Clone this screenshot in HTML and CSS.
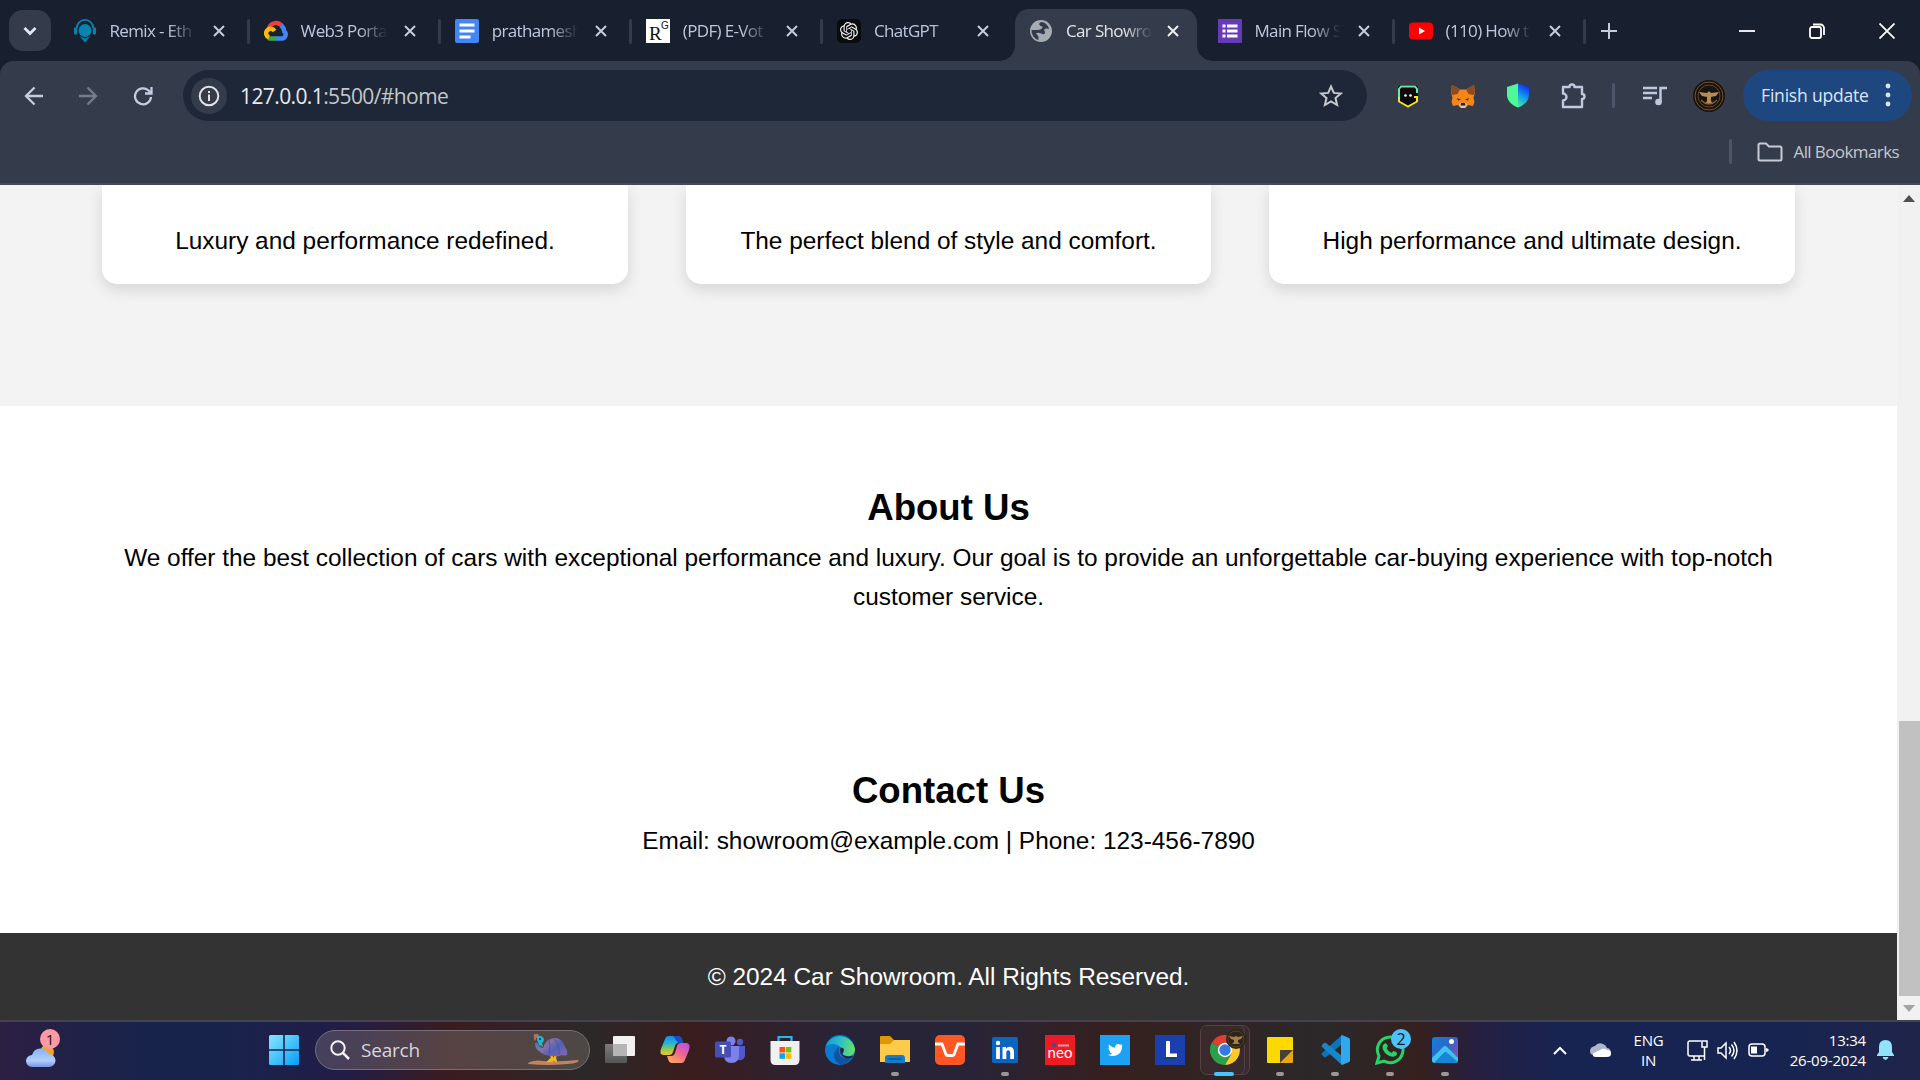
FILE: index.html
```html
<!DOCTYPE html>
<html lang="en"><head><meta charset="utf-8"><title>Car Showroom</title><link rel="stylesheet" href="styles.css"></head>
<body>
<header class="tabstrip">
  <button class="tab-search"><svg width="16" height="12" viewBox="0 0 16 12"><path d="M2.500 3l5.500 5.500L13.500 3" fill="none" stroke="#e3e6ee" stroke-width="2.800"/></svg></button>
  <div class="tab"><svg class="fav" viewBox="0 0 24 26"><circle cx="12" cy="12.500" r="7" fill="#0584b0"/><path d="M3 10a9 9 0 0 1 18 0" fill="none" stroke="#0584b0" stroke-width="2"/><rect y="9" width="3.500" height="8" rx="1.700" fill="#0584b0"/><rect x="20.500" y="9" width="3.500" height="8" rx="1.700" fill="#0584b0"/><path d="M6 18.500l6 3 6-3-6 7z" fill="#0584b0"/></svg><span class="tab-title">Remix - Eth</span><svg class="x" viewBox="0 0 14 14"><path d="M2 2l10 10M12 2L2 12"/></svg></div>
  <div class="tab"><svg class="fav" viewBox="0 0 24 24"><path d="M5 9A7.500 7.500 0 0 1 18 7" fill="none" stroke="#ea4335" stroke-width="4.500"/><path d="M17 6.500a8 8 0 0 1 3.300 6A4 4 0 0 1 18 19.500h-6" fill="none" stroke="#4285f4" stroke-width="4.500"/><path d="M12.500 19.500H7a5 5 0 0 1-2.500-.6" fill="none" stroke="#34a853" stroke-width="4.500"/><path d="M5 18.500A4.500 4.500 0 1 1 10.500 12" fill="none" stroke="#fbbc05" stroke-width="4.500"/></svg><span class="tab-title">Web3 Porta</span><svg class="x" viewBox="0 0 14 14"><path d="M2 2l10 10M12 2L2 12"/></svg></div>
  <div class="tab"><svg class="fav" viewBox="0 0 24 24"><rect width="24" height="24" rx="2" fill="#4285f4"/><path d="M4.500 6h15M4.500 12h15M4.500 18h11" stroke="#fff" stroke-width="3"/></svg><span class="tab-title">prathamesh</span><svg class="x" viewBox="0 0 14 14"><path d="M2 2l10 10M12 2L2 12"/></svg></div>
  <div class="tab"><svg class="fav" viewBox="0 0 24 24"><rect width="24" height="24" fill="#fff"/><text x="3" y="21" font-family="Liberation Serif" font-size="19" fill="#111">R</text><text x="15" y="10" font-family="Liberation Sans" font-size="10" fill="#111">G</text></svg><span class="tab-title">(PDF) E-Vot</span><svg class="x" viewBox="0 0 14 14"><path d="M2 2l10 10M12 2L2 12"/></svg></div>
  <div class="tab no-sep"><svg class="fav" viewBox="0 0 24 24"><rect width="24" height="24" rx="5" fill="#090b0c"/><path transform="translate(3 3) scale(.75)" fill="#f0f0f0" d="M22.2819 9.8211a5.9847 5.9847 0 0 0-.5157-4.9108 6.0462 6.0462 0 0 0-6.5098-2.9A6.0651 6.0651 0 0 0 4.9807 4.1818a5.9847 5.9847 0 0 0-3.9977 2.9 6.0462 6.0462 0 0 0 .7427 7.0966 5.98 5.98 0 0 0 .511 4.9107 6.051 6.051 0 0 0 6.5146 2.9001A5.9847 5.9847 0 0 0 13.2599 24a6.0557 6.0557 0 0 0 5.7718-4.2058 5.9894 5.9894 0 0 0 3.9977-2.9001 6.0557 6.0557 0 0 0-.7475-7.0729zm-9.022 12.6081a4.4755 4.4755 0 0 1-2.8764-1.0408l.1419-.0804 4.7783-2.7582a.7948.7948 0 0 0 .3927-.6813v-6.7369l2.02 1.1686a.071.071 0 0 1 .038.052v5.5826a4.504 4.504 0 0 1-4.4945 4.4944zm-9.6607-4.1254a4.4708 4.4708 0 0 1-.5346-3.0137l.142.0852 4.783 2.7582a.7712.7712 0 0 0 .7806 0l5.8428-3.3685v2.3324a.0804.0804 0 0 1-.0332.0615L9.74 19.9502a4.4992 4.4992 0 0 1-6.1408-1.6464zM2.3408 7.8956a4.485 4.485 0 0 1 2.3655-1.9728V11.6a.7664.7664 0 0 0 .3879.6765l5.8144 3.3543-2.0201 1.1685a.0757.0757 0 0 1-.071 0l-4.8303-2.7865A4.504 4.504 0 0 1 2.3408 7.872zm16.5963 3.8558L13.1038 8.364 15.1192 7.2a.0757.0757 0 0 1 .071 0l4.8303 2.7913a4.4944 4.4944 0 0 1-.6765 8.1042v-5.6772a.79.79 0 0 0-.407-.667zm2.0107-3.0231l-.142-.0852-4.7735-2.7818a.7759.7759 0 0 0-.7854 0L9.409 9.2297V6.8974a.0662.0662 0 0 1 .0284-.0615l4.8303-2.7866a4.4992 4.4992 0 0 1 6.6802 4.66zM8.3065 12.863l-2.02-1.1638a.0804.0804 0 0 1-.038-.0567V6.0742a4.4992 4.4992 0 0 1 7.3757-3.4537l-.142.0805L8.704 5.459a.7948.7948 0 0 0-.3927.6813zm1.0976-2.3654l2.602-1.4998 2.6069 1.4998v2.9994l-2.5974 1.4997-2.6067-1.4997Z"/></svg><span class="tab-title">ChatGPT</span><svg class="x" viewBox="0 0 14 14"><path d="M2 2l10 10M12 2L2 12"/></svg></div>
  <div class="tab active no-sep"><svg class="fav" viewBox="0 0 24 24"><circle cx="12" cy="12" r="11" fill="#a7abb2"/><path d="M12.500 3c-4 1-2 4 .5 4.500 2 .5-1 3.500-4 3.500H2.500a9.500 9.500 0 0 0 7 10v-3.500l-2.500-3c2-1.500 5 0 6 .5 2 1 4-1 2.500-3s2-3.500 4.500-2c-.5-3.500-3.500-6.500-7.500-7z" fill="#343c4c"/></svg><span class="tab-title">Car Showro</span><svg class="x" viewBox="0 0 14 14"><path d="M2 2l10 10M12 2L2 12"/></svg></div>
  <div class="tab"><svg class="fav" viewBox="0 0 24 24"><rect width="24" height="24" rx="1" fill="#673ab7"/><path d="M4.500 7h3m1.500 0h10.500M4.500 12h3m1.500 0h10.500M4.500 17h3m1.500 0h10.500" stroke="#fff" stroke-width="3"/></svg><span class="tab-title">Main Flow S</span><svg class="x" viewBox="0 0 14 14"><path d="M2 2l10 10M12 2L2 12"/></svg></div>
  <div class="tab"><svg class="fav" viewBox="0 0 24 24"><rect y="3.500" width="24" height="17" rx="4" fill="#f00"/><path d="M10 8.500l6 3.500-6 3.500z" fill="#fff"/></svg><span class="tab-title">(110) How t</span><svg class="x" viewBox="0 0 14 14"><path d="M2 2l10 10M12 2L2 12"/></svg></div>
  <svg class="new-tab" width="16" height="16" viewBox="0 0 16 16"><path d="M8 0v16M0 8h16" stroke="#c3cde0" stroke-width="2"/></svg>
  <div class="window-controls">
    <svg width="16" height="16" viewBox="0 0 16 16"><path d="M0 8h16"/></svg>
    <svg width="16" height="16" viewBox="0 0 16 16"><rect x="1" y="4" width="11" height="11" rx="2"/><path d="M4 1.500h7.500a3.500 3.500 0 0 1 3.500 3.500v7"/></svg>
    <svg width="16" height="16" viewBox="0 0 16 16"><path d="M.5.5l15 15M15.500.5l-15 15"/></svg>
  </div>
</header>
<div class="toolbar">
  <nav class="address-row">
    <svg class="nav" viewBox="0 0 20 20"><path d="M19 10H2m8.500-8.500L2 10l8.500 8.500"/></svg>
    <svg class="nav dim" viewBox="0 0 20 20"><path d="M1 10h17M9.500 1.500L18 10l-8.500 8.500"/></svg>
    <svg class="nav" viewBox="0 0 20 20"><path d="M18 11a8 8 0 1 1-2.500-6.500L18 7M18.500 1v6.500H12"/></svg>
    <div class="omnibox">
      <span class="info"><svg width="22" height="22" viewBox="0 0 22 22"><circle cx="11" cy="11" r="9.300" fill="none" stroke="#e3e3e6" stroke-width="2"/><path d="M11 9.500v6.500M11 6v2" stroke="#e3e3e6" stroke-width="2"/></svg></span>
      <span class="url"><b>127.0.0.1</b>:5500/#home</span>
      <svg class="star" width="24" height="24" viewBox="0 0 24 24"><path d="M12 2.500l2.800 6.400 7 .6-5.300 4.600 1.600 6.900-6.100-3.700-6.100 3.700 1.600-6.900-5.300-4.600 7-.6z" fill="none" stroke="#c7c9cf" stroke-width="2"/></svg>
    </div>
    <div class="extensions">
      <svg width="24" height="24" viewBox="0 0 24 24"><path d="M4 1h16l2 2v15l-10 6-10-6V3z" fill="#08090c"/><path d="M3 14V5l2-2.500h14l2 2.500v4" fill="none" stroke="#6ee7a0" stroke-width="2"/><path d="M3 13v4.500l9 5 9-5V13h-3" fill="none" stroke="#f7df2e" stroke-width="2"/><circle cx="9.500" cy="11.500" r="1.300" fill="#fff"/><circle cx="14.500" cy="11.500" r="1.300" fill="#fff"/></svg>
      <svg width="24" height="24" viewBox="0 0 24 24"><path d="M1 1l8 4.500h6L23 1l1 7-1.500 6 1 4-1.500 4-5-1-2 2.500h-6L7 21l-5 1-1.500-4 1-4L0 8z" fill="#f6851b"/><path d="M1 1l8 4.500L6.500 10l-5 1L0 8zM23 1l-8 4.500 2.500 4.500 5 1L24 8z" fill="#8f4b20"/><path d="M6 14l4 1.500-3 1zM18 14l-4 1.500 3 1z" fill="#303443"/><path d="M9 19h6l1 2-2 3h-4l-2-3z" fill="#d8c8b8"/><path d="M10 19h4l.5 2.500h-5z" fill="#202226"/></svg>
      <svg width="24" height="25" viewBox="0 0 24 25"><path d="M12 .5v24C5 22 1 17 1 12V4z" fill="#50f796"/><path d="M12 .5L23 4v8c0 5-4 10-11 12.500z" fill="url(#shield)"/><defs><linearGradient id="shield" x1=".3" y1="0" x2="0" y2="1"><stop stop-color="#1039f5"/><stop offset=".5" stop-color="#13a3e8"/><stop offset="1" stop-color="#49f597"/></linearGradient></defs></svg>
      <svg width="26" height="26" viewBox="0 0 26 26"><path d="M2 4h6.500a2.500 2.500 0 0 1 5 0H21v7a2.500 2.500 0 0 1 0 5v8H2v-6.500a3.500 3.500 0 0 0 0-7z" fill="none" stroke="#c0cadf" stroke-width="2.400" stroke-linejoin="round"/></svg>
    </div>
    <i class="divider"></i>
    <svg class="music" width="24" height="20" viewBox="0 0 24 20"><path d="M0 2h14M0 7h14M0 12h9M17.500 16V2H24" fill="none" stroke="#c0cadf" stroke-width="2.400"/><circle cx="15.500" cy="16" r="3.300" fill="#c0cadf"/></svg>
    <svg class="avatar" width="32" height="32" viewBox="0 0 32 32"><circle cx="16" cy="16" r="16" fill="#17130f"/><circle cx="16" cy="16" r="14" fill="none" stroke="#76542f" stroke-width="1"/><circle cx="16" cy="16" r="11" fill="none" stroke="#694821"/><path d="M6 12l8 1 2-2 2 2 8-1-3 4-5 1v4l2 3h-8l2-3v-4l-5-1z" fill="#b98a51"/><path d="M8 20q8 8 16 0" fill="none" stroke="#8a6234" stroke-width="1.200"/></svg>
    <button class="update"><span>Finish update</span><svg width="6" height="26" viewBox="0 0 6 26"><g fill="#d9e5fb"><circle cx="3" cy="4" r="2.400"/><circle cx="3" cy="13" r="2.400"/><circle cx="3" cy="22" r="2.400"/></g></svg></button>
  </nav>
  <div class="bookmarks"><i class="divider"></i><svg width="26" height="20" viewBox="0 0 26 20"><path d="M1.500 3q0-1.500 1.500-1.500h6l3 3h11q1.500 0 1.500 1.500v11q0 1.500-1.500 1.500H3q-1.500 0-1.500-1.500z" fill="none" stroke="#c9cbd2" stroke-width="2"/></svg><span>All Bookmarks</span></div>
</div>
<div class="viewport">
  <main class="page">
    <section class="cars">
      <article class="card">Luxury and performance redefined.</article>
      <article class="card">The perfect blend of style and comfort.</article>
      <article class="card">High performance and ultimate design.</article>
    </section>
    <section class="about"><h2>About Us</h2><p>We offer the best collection of cars with exceptional performance and luxury. Our goal is to provide an unforgettable car-buying experience with top-notch customer service.</p></section>
    <section class="contact"><h2>Contact Us</h2><p>Email: showroom@example.com | Phone: 123-456-7890</p></section>
    <footer class="footer">© 2024 Car Showroom. All Rights Reserved.</footer>
  </main>
  <div class="scrollbar"><svg width="12" height="7" viewBox="0 0 12 7"><path d="M6 0l6 7H0z" fill="#505050"/></svg><i class="thumb"></i><svg width="12" height="7" viewBox="0 0 12 7"><path d="M0 0h12L6 7z" fill="#a3a3a3"/></svg></div>
</div>
<footer class="taskbar">
  <div class="weather"><svg width="34" height="38" viewBox="0 0 34 38"><defs><linearGradient id="cloud" x1="0" y1="0" x2="0" y2="1"><stop stop-color="#88b2f5"/><stop offset=".65" stop-color="#b2cffc"/><stop offset="1" stop-color="#7895e5"/></linearGradient></defs><circle cx="22" cy="21" r="7" fill="#f6a21a"/><path d="M7 36a6 6 0 0 1 0-12 9 9 0 0 1 17-1 6.500 6.500 0 0 1 0 13z" fill="url(#cloud)"/></svg><span class="badge pink">1</span></div>
  <div class="start-group">
    <svg width="30" height="30" viewBox="0 0 30 30"><defs><linearGradient id="win" x1="0" y1="0" x2="1" y2="1"><stop stop-color="#8ae3fb"/><stop offset=".5" stop-color="#46c5fb"/><stop offset="1" stop-color="#079bf9"/></linearGradient></defs><path d="M0 1.500Q0 0 1.500 0h12.700v14.200H0zM15.800 0h12.700Q30 0 30 1.500v12.700H15.800zM0 15.800h14.200V30H1.500Q0 30 0 28.500zM15.800 15.800H30v12.700q0 1.500-1.500 1.500H15.800z" fill="url(#win)"/></svg>
    <div class="search"><svg width="20" height="20" viewBox="0 0 20 20"><circle cx="8" cy="8" r="6.700" fill="none" stroke="#f2f2f5" stroke-width="2"/><path d="M12.500 12.500l6.500 6.500" stroke="#f2f2f5" stroke-width="2.500"/></svg><span>Search</span>
      <svg class="bird" width="52" height="32" viewBox="0 0 52 32"><defs><linearGradient id="plume" x1="0" y1="0" x2="1" y2=".6"><stop stop-color="#3d7fc0"/><stop offset=".45" stop-color="#8a6fa8"/><stop offset=".7" stop-color="#4d62b8"/><stop offset="1" stop-color="#7a62b4"/></linearGradient></defs><path d="M1 30q0-3 10-3.500 16 2 40-.5 2 2-5 3.500-20 2.500-45 .5z" fill="#c5835c"/><path d="M24 19l1 5-3 3h3l3-3 1 4M30 19l-4 8" fill="none" stroke="#eeb62f" stroke-width="2.400"/><path d="M10 9q3 5 6 5Q19 4 28 4q7 0 10 9 3 3 2 8-3 1-5 0-4 2-8 1-11 0-15-5-4-2-4-8z" fill="url(#plume)"/><path d="M27 5q6 6 5 16M22 6q2 7 0 13" fill="none" stroke="#5b4f96" stroke-width="1"/><path d="M7 0q4-1 5 1l-2 2-2 4q-2-3-1-7z" fill="#ad725e"/><path d="M10 2q5-1 7 3 0 3-2 4l1 4-4-2-2-5z" fill="#22b4d2"/><circle cx="13" cy="5" r="1" fill="#123"/></svg></div>
  </div>
  <div class="apps">
    <span class="app"><svg viewBox="0 0 30 30"><defs><linearGradient id="tv1" x1="0" y1="0" x2="0" y2="1"><stop stop-color="#7b7b7b"/><stop offset="1" stop-color="#555"/></linearGradient></defs><rect y="9" width="22" height="19" rx="1" fill="url(#tv1)"/><rect x="8" y="1" width="22" height="20" rx="1" fill="#f1f1f1"/><rect x="8" y="9" width="14" height="12" fill="#b5b5b5"/></svg></span>
    <span class="app"><svg viewBox="0 0 30 30"><defs><linearGradient id="cp1" x1="0" y1="0" x2="0" y2="1"><stop stop-color="#188bed"/><stop offset=".4" stop-color="#28b5d0"/><stop offset=".7" stop-color="#8acb49"/><stop offset="1" stop-color="#f8c62f"/></linearGradient><linearGradient id="cp2" x1="1" y1="0" x2=".3" y2="1"><stop stop-color="#a855f0"/><stop offset=".5" stop-color="#ee6195"/><stop offset="1" stop-color="#ffa45d"/></linearGradient></defs><path d="M8 1h10q3 0 4 4l1 3h-5q-2 0-3 3l-2 6q-1 3-4 3H4q-5 0-3-6L5 4q1-3 3-3z" fill="url(#cp1)"/><path d="M22 28H12q-3 0-4-4l-1-3h5q2 0 3-3l2-7q1-3 4-3h5q5 0 3 7l-4 10q-1 3-3 3z" fill="url(#cp2)"/><path d="M13 1h5q3 0 4 4l1 3h-5z" fill="#1750c4"/></svg></span>
    <span class="app"><svg viewBox="0 0 30 30"><circle cx="16" cy="6" r="4.500" fill="#7b83eb"/><circle cx="25" cy="7" r="3.200" fill="#5059c9"/><path d="M20 11h10v9q0 6-7 5z" fill="#5059c9"/><path d="M9 11h15v9q0 8-7.500 8T9 20z" fill="#7b83eb"/><rect y="6.500" width="16" height="16" rx="1.500" fill="#464eb8"/><text x="8" y="19" text-anchor="middle" font-family="Open Sans" font-weight="700" font-size="12" fill="#fff">T</text></svg></span>
    <span class="app"><svg viewBox="0 0 30 30"><path d="M8.500 7V2h13v5" fill="none" stroke="#27b7ed" stroke-width="2.200"/><path d="M.5 6h29v19q0 5-5 5h-19q-5 0-5-5z" fill="#f0f0f0"/><path d="M9.500 12H15v5.500H9.500z" fill="#f35325"/><path d="M15.800 12h5.500v5.500h-5.500z" fill="#81bc06"/><path d="M9.500 18.300H15v5.500H9.500z" fill="#05a6f0"/><path d="M15.800 18.300h5.500v5.500h-5.500z" fill="#ffba08"/></svg></span>
    <span class="app"><svg viewBox="0 0 30 30"><defs><linearGradient id="edge" x1="0" y1=".4" x2="1" y2=".5"><stop stop-color="#169bd8"/><stop offset=".5" stop-color="#2bc3c6"/><stop offset="1" stop-color="#69e359"/></linearGradient></defs><circle cx="15" cy="15" r="15" fill="#087bd2"/><path d="M27 22a15 15 0 0 1-11 8q-7-3-7-10 0-5 5-8-2 10 6 11 4 0 7-1z" fill="#13529d"/><path d="M1 11A15 15 0 0 1 30 15q-1 6-7 6-4 0-6-2 2-2 1-5Q9 6 1 11z" fill="url(#edge)"/><path d="M19 15q-.5 3-2 4 3 3.500 10 2l1.500 1q-4 2-8 1-7-3-5-10 3-1 3.500 2z" fill="#272534"/></svg></span>
    <span class="app run"><svg viewBox="0 0 30 30"><path d="M0 2q0-1 1-1h9l4 4H29q1 0 1 1v5H0z" fill="#dc9904"/><path d="M0 9h10l4-4h16v22H0z" fill="#fdcb49"/><path d="M5 28v-5q0-3 3-3h14q3 0 3 3v5z" fill="#147dca"/><path d="M8.500 24h13" stroke="#0b599c" stroke-width="1.500"/></svg></span>
    <span class="app"><svg viewBox="0 0 30 30"><rect width="30" height="30" rx="5" fill="#ff5724"/><path d="M0 9h7l4 10.500q.5 1 1.500 1h5q1 0 1.500-1L23 9h7" fill="none" stroke="#fff" stroke-width="2.800"/></svg></span>
    <span class="app run"><svg viewBox="0 0 30 30"><rect x="2" y="2" width="26" height="26" rx="1.500" fill="#0a66c2"/><circle cx="8" cy="8" r="2.200" fill="#fff"/><path d="M6.100 12h3.800v12H6.100zM12.500 12H16v1.800c2-3.500 8-3 8 3.200v7h-3.800v-6.500c0-3-3.900-3-3.900 0V24h-3.800z" fill="#fff"/></svg></span>
    <span class="app"><svg viewBox="0 0 30 30"><rect width="30" height="30" fill="#ed1c24"/><text x="15" y="23" text-anchor="middle" font-family="Lato" font-size="15" fill="#fff">neo</text><circle cx="9" cy="10" r="2.500" fill="#6e3b87"/><path d="M13 10.500h11" stroke="#eba0a3" stroke-width="2"/></svg></span>
    <span class="app"><svg viewBox="0 0 30 30"><rect width="30" height="30" fill="#1da1f2"/><path d="M22 11.500c0 6-4 9.500-9 9.500-2 0-3.500-.5-5-1.300 2 .1 3.300-.4 4.300-1.200-1.500-.2-2.400-1-2.800-2.200h1.200c-1.500-.6-2.200-1.700-2.200-3.100l1.200.4C8.300 12.200 8.300 10.800 9 9.500c1.700 2 3.700 3.200 6.200 3.300-.6-3.600 3-5 5-3l2-.7-1.200 1.700 1.700-.4z" fill="#fff"/></svg></span>
    <span class="app"><svg viewBox="0 0 30 30"><rect width="30" height="30" fill="#1c3faf"/><path d="M11 22l-3 2H20l2-2z" fill="#0b4a5c"/><path d="M11 6h4v12.500h7V22H11z" fill="#fff"/></svg></span>
    <span class="app current"><svg viewBox="0 0 30 30"><path d="M15 15L2 7.500A15 15 0 0 1 28 7.500z" fill="#e23d30"/><path d="M15 15L2 7.500A15 15 0 0 0 15 30l6.500-11.200z" fill="#2c9f4b"/><path d="M15 8h13.200A15 15 0 0 1 15 30l6.500-11.200z" fill="#fdca28"/><circle cx="15" cy="15" r="7.200" fill="#fff"/><circle cx="15" cy="15" r="5.700" fill="#3479e9"/></svg><svg class="profile" viewBox="0 0 20 20"><circle cx="10" cy="10" r="10" fill="#2d241c"/><circle cx="10" cy="10" r="8" fill="none" stroke="#5a4125"/><path d="M3 7l5 1 2-1 2 1 5-1-2 3-3 1v2l2 2H6l2-2v-2l-3-1z" fill="#a57f49"/></svg></span>
    <span class="app run"><svg viewBox="0 0 30 30"><path d="M3 2h24q1 0 1 1v12l-13 13H3q-1 0-1-1V3q0-1 1-1z" fill="#ffd800"/><path d="M15 15h13L15 28z" fill="#454139"/><path d="M15 28L28 15v12q0 1-1 1z" fill="#eba711"/></svg></span>
    <span class="app run"><svg viewBox="0 0 30 30"><path d="M22 0L2 18q-1 1 0 2l2 2q1 .6 2 0L22 9z" fill="#0c75b9"/><path d="M22 30L2 12q-1-1 0-2l2-2q1-.6 2 0l16 13z" fill="#1487cd"/><path d="M22 0l7 3q1 .5 1 1.500v21q0 1-1 1.500l-7 3-1-1V1z" fill="#2fa8ee"/></svg></span>
    <span class="app run"><svg viewBox="0 0 30 30"><path d="M2 28l2-7A12.800 12.800 0 1 1 9 26z" fill="none" stroke="#25d366" stroke-width="3"/><path d="M9 9q2-2 4 2l-1.500 2q2 4 5 5l2-2q5 1 3 4-2 3-7 1-6-3-7-8-.3-3 1.500-4z" fill="#25d366"/></svg><b class="badge blue">2</b></span>
    <span class="app run"><svg viewBox="0 0 30 30"><defs><linearGradient id="ph" x1="0" y1="0" x2="1" y2=".7"><stop stop-color="#137edb"/><stop offset=".6" stop-color="#3465c5"/><stop offset="1" stop-color="#8554b0"/></linearGradient></defs><rect x="2" y="2" width="26" height="26" rx="3" fill="url(#ph)"/><circle cx="21.500" cy="6.500" r="2.500" fill="#fff"/><path d="M2 23l11-11q2-2 4 0l11 11v2q0 3-3 3H5q-3 0-3-3z" fill="#3fc4f0"/><path d="M4 28l9.500-10q2-2 4 0L28 27l-3 1z" fill="#1886d7"/></svg></span>
  </div>
  <div class="tray">
    <svg class="chevron" width="14" height="9" viewBox="0 0 14 9"><path d="M1 8l6-6 6 6" fill="none" stroke="#fff" stroke-width="2"/></svg>
    <svg class="onedrive" width="21" height="14" viewBox="0 0 21 14"><path d="M4 12Q0 12 0 8t5-5q3-4 8-2 3 1 4 4 3 0 4 4t-4 4z" fill="#aeb5cc"/><path d="M3 13q-1-3 3-4l6-3q3-1 5 1 4 0 4 3.500T17 14H6q-2 0-3-1z" fill="#fff"/></svg>
    <span class="lang">ENG<br>IN</span>
    <svg class="monitor" width="21" height="21" viewBox="0 0 21 21"><path d="M14 1H3Q1 1 1 3v11q0 2 2 2h14M4 20h11M7 16v4M12 16v4M15 1h5v6h-5zM17.500 7v13" fill="none" stroke="#fff" stroke-width="1.500"/></svg>
    <svg class="volume" width="21" height="19" viewBox="0 0 21 19"><path d="M1 7h3l5-5v15l-5-5H1zM12 6q3 3.500 0 7M14.500 3.500q5 6 0 12M17 1q6 8.500 0 17" fill="none" stroke="#fff" stroke-width="1.500"/></svg>
    <svg class="battery" width="21" height="14" viewBox="0 0 21 14"><rect x="1" y="1" width="16" height="12" rx="3" fill="none" stroke="#fff" stroke-width="1.500"/><path d="M3 3.500h6v7H3zM18 5l2.500 1v2L18 9z" fill="#fff"/></svg>
    <span class="clock">13:34<br>26-09-2024</span>
    <svg class="bell" width="17" height="20" viewBox="0 0 17 20"><path d="M8.500 0Q15 0 15 7v5l2 3v1H0v-1l2-3V7q0-7 6.500-7zM5.500 17h6q-1 3-3 3t-3-3z" fill="#91e3fc"/></svg>
  </div>
</footer>
</body></html>
```
FILE: styles.css
```css
* { box-sizing: border-box; }
body { margin: 0; width: 1920px; height: 1080px; overflow: hidden; display: flex; flex-direction: column; background: #182030; font-family: "Open Sans", "Noto Sans", sans-serif; }
svg { display: block; flex: none; }
button { border: 0; padding: 0; font: inherit; color: inherit; }
h2, p { margin: 0; }

.tabstrip { flex: none; height: 61px; display: flex; align-items: center; background: #182030; color: #bdc8dc; }
.tab-search { width: 42px; height: 41px; margin: 0 7px 0 9px; border-radius: 14px; background: #343c4c; display: grid; place-items: center; }
.tab { width: 191.1px; height: 52px; margin-top: 9px; padding: 0 23px 9px 15px; display: flex; align-items: center; position: relative; flex: none; }
.tab::after { content: ""; position: absolute; right: -1px; top: 10px; width: 3px; height: 25px; border-radius: 2px; background: #343c4c; }
.tab.no-sep::after { display: none; }
.fav { width: 24px; height: 24px; }
.tab-title { width: 91px; margin-left: 12.5px; white-space: nowrap; font-size: 17px; letter-spacing: -.65px; -webkit-mask-image: linear-gradient(90deg, #000 64%, transparent 95%); mask-image: linear-gradient(90deg, #000 64%, transparent 95%); }
.x { width: 14px; height: 14px; margin-left: auto; stroke: #c3cde0; stroke-width: 2; fill: none; }
.tab.active { width: 181.5px; margin-left: 2px; margin-right: 6px; padding-left: 14px; padding-right: 17px; background: #343c4c; border-radius: 14px 14px 0 0; color: #e3e4e8; }
.active .x { stroke: #eee; }
.tab.active::before, .tab.active::after { content: ""; display: block; position: absolute; top: auto; bottom: 0; width: 15px; height: 15px; border-radius: 0; }
.tab.active::before { left: -15px; background: radial-gradient(circle at 0 0, transparent 14.5px, #343c4c 15px); }
.tab.active::after { right: -15px; background: radial-gradient(circle at 100% 0, transparent 14.5px, #343c4c 15px); }
.new-tab { margin-left: 16px; }
.window-controls { margin-left: auto; margin-right: 25px; display: flex; gap: 54px; stroke: #fff; stroke-width: 1.8; fill: none; }

.toolbar { flex: none; height: 124px; background: #343c4c; border-bottom: 2px solid #474a50; border-radius: 14px 14px 0 0; padding-top: 9px; }
.address-row { height: 51px; display: flex; align-items: center; padding: 0 8px 0 24px; }
.nav { width: 20px; height: 20px; margin-right: 34px; fill: none; stroke: #c3cde0; stroke-width: 2.3; }
.nav.dim { stroke: #747d8e; }
.nav:nth-child(3) { margin: 0 30px 0 1px; }
.omnibox { width: 1184px; height: 51px; border-radius: 26px; background: #1e2737; display: flex; align-items: center; padding: 0 24px 0 8px; }
.info { width: 36px; height: 36px; border-radius: 50%; background: #343c4c; display: grid; place-items: center; }
.url { margin-left: 13px; font-size: 21px; color: #c5c7cc; letter-spacing: -.6px; }
.url b { font-weight: 400; color: #e8eaee; }
.star { margin-left: auto; }
.extensions { display: flex; align-items: center; gap: 31.2px; margin-left: 29px; }
.divider { width: 3px; height: 25px; border-radius: 2px; background: #4d5668; }
.address-row .divider { margin: 0 28px 0 25px; }
.avatar { margin: 0 18px 0 26px; }
.update { width: 169px; height: 51px; border-radius: 26px; background: #1f477f; color: #dbe6fa; font-size: 17.5px; letter-spacing: -.2px; display: flex; align-items: center; justify-content: space-between; padding: 0 21px 1px 18px; white-space: nowrap; }
.bookmarks { height: 62px; display: flex; align-items: center; justify-content: flex-end; padding: 0 21px 1px 0; font-size: 17px; letter-spacing: -.6px; color: #c5c7cc; }
.bookmarks svg { margin: 0 11px 0 25px; }

.viewport { flex: none; height: 835px; display: flex; overflow: hidden; }
.page { width: 1897px; background: #fff; font-family: "Liberation Sans", Arial, sans-serif; font-size: 24.4px; line-height: 39.04px; text-align: center; color: #000; }
.cars { height: 221px; background: #f3f3f3; padding: 0 102px; display: flex; gap: 57.6px; overflow: hidden; }
.card { flex: 1; height: 99px; padding-top: 36px; background: #fff; border-radius: 0 0 15px 15px; box-shadow: 0 6px 15px rgba(0,0,0,.12); }
.about, .contact { padding: 73.2px 102px; }
h2 { font-size: 36.6px; line-height: 58.56px; }
.footer { height: 88px; background: #333; color: #fff; padding-top: 24.4px; }
.scrollbar { width: 23px; background: #f1f1f1; display: flex; flex-direction: column; align-items: center; padding: 10px 0 8px; }
.thumb { width: 21px; height: 275px; margin: auto 0 9px 2px; background: #c1c1c1; }

.taskbar { flex: none; height: 60px; padding-bottom: 2px; border-top: 2px solid #45434f; display: flex; align-items: center; position: relative; color: #fff; background: linear-gradient(90deg, #2c1f42 0, #18234b 140px, #18234b 230px, #211d48 340px, #3a1c20 450px, #2c2828 590px, #3a1d1e 690px, #272438 850px, #272438 960px, #35201f 1110px, #2b2829 1320px, #35201f 1420px, #241f42 1480px, #172451 1560px, #172451 1780px, #20244a 1920px); }
.weather { position: relative; margin-left: 25px; width: 36px; }
.badge { position: absolute; display: grid; place-items: center; border-radius: 50%; width: 20px; height: 20px; font-size: 15px; font-weight: 400; line-height: 1; color: #1b1416; }
.pink { right: 1px; top: -2px; background: #ff99a4; }
.start-group { margin-left: 208px; display: flex; align-items: center; gap: 16px; }
.search { width: 275px; height: 40px; border: 1px solid #77707a; border-radius: 20px; background: linear-gradient(90deg, #45405f, #574243 50%, #4d4844); display: flex; align-items: center; padding: 0 10px 0 14px; font-size: 19px; color: #d8d6db; letter-spacing: -.2px; }
.search span { margin: 0 auto 0 11px; }
.apps { margin-left: 2px; display: flex; }
.app { width: 55px; height: 50px; display: grid; place-items: center; position: relative; }
.app svg { width: 30px; height: 30px; }
.app.run::after, .app.current::after { content: ""; position: absolute; bottom: -1px; width: 8px; height: 4px; border-radius: 2px; background: #9b9798; left: 23.5px; }
.current::before { content: ""; position: absolute; inset: 0 2px 0 3px; border: 1px solid #544244; border-radius: 7px; background: #44303280; box-shadow: inset -5px 0 0 -1px #3a2a2c, inset -6px 0 0 -1px #544244; }
.app.current > svg { position: relative; }
.app.current .profile { position: absolute; width: 20px; height: 20px; right: 6px; top: 4px; }
.app.current::after { width: 20px; left: 17px; background: #4cc2ff; }
.blue { background: #4cc2ff; right: 6px; top: 4px; font-size: 16px; }
.tray { margin-left: auto; display: flex; align-items: center; padding-right: 26px; font-size: 15px; line-height: 20px; text-align: right; letter-spacing: -.2px; }
.onedrive { margin-left: 23px; }
.lang { width: 31px; margin-left: 22px; text-align: center; }
.monitor { margin-left: 23px; }
.volume { margin-left: 9px; }
.battery { margin-left: 10px; }
.clock { width: 80px; margin-left: 17px; white-space: nowrap; }
.bell { margin-left: 11px; }
```
